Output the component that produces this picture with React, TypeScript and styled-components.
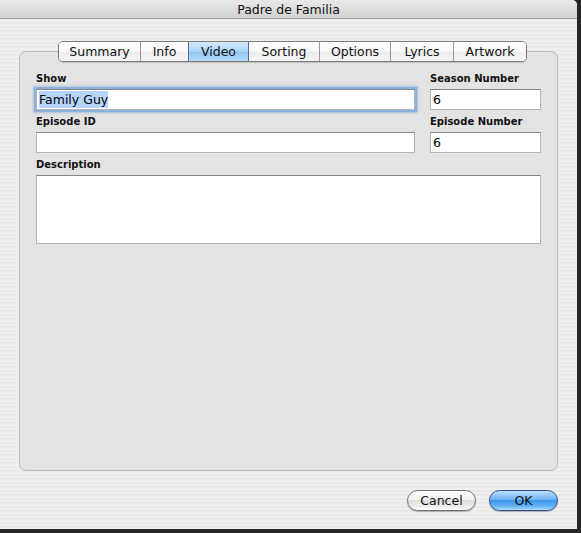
import styled, { createGlobalStyle } from "styled-components";

const GlobalStyle = createGlobalStyle`
  html, body {
    margin: 0;
    padding: 0;
    background: #262626;
  }
  body {
    font-family: "DejaVu Sans", "Liberation Sans", sans-serif;
    color: #000;
  }
`;

const Window = styled.div`
  width: 577px;
  height: 529px;
  display: flex;
  flex-direction: column;
  background: repeating-linear-gradient(
    to bottom,
    #efefef 0px,
    #efefef 2px,
    #e9e9e9 2px,
    #e9e9e9 4px
  );
  border-top-right-radius: 5px;
  overflow: hidden;
`;

const TitleBar = styled.div`
  height: 18px;
  flex: none;
  display: flex;
  align-items: center;
  justify-content: center;
  background: linear-gradient(to bottom, #e9e9e9, #d2d2d2);
  border-bottom: 1px solid #9c9c9c;
  font-size: 12.5px;
  color: #111;
`;

const Body = styled.div`
  flex: 1;
  display: flex;
  flex-direction: column;
  padding: 32px 19px 0 19px;
`;

const GroupBox = styled.div`
  height: 420px;
  box-sizing: border-box;
  border: 1px solid #b9b9b9;
  border-radius: 7px;
  background: #e3e3e3;
  display: flex;
  flex-direction: column;
`;

const TabStrip = styled.div`
  display: flex;
  margin: -11px 0 0 38px;
  height: 21px;
  box-sizing: border-box;
  border: 1px solid #7a7a7a;
  border-radius: 5px;
  overflow: hidden;
  align-self: flex-start;
  box-shadow: 0 1px 1px rgba(0, 0, 0, 0.15);
`;

const Tab = styled.div<{ $active?: boolean; $w: number }>`
  width: ${(p) => p.$w}px;
  box-sizing: border-box;
  display: flex;
  align-items: center;
  justify-content: center;
  font-size: 12.5px;
  color: #111;
  border-left: 1px solid #9a9a9a;
  &:first-child {
    border-left: none;
  }
  background: ${(p) =>
    p.$active
      ? "linear-gradient(to bottom, #d6ebfb 0%, #a9d3f5 50%, #8ec3ef 51%, #b8e0fb 100%)"
      : "linear-gradient(to bottom, #ffffff 0%, #f7f7f7 50%, #ececec 51%, #f6f6f6 100%)"};
  ${(p) => p.$active && "border-left-color: #4f6c9a; & + div { border-left-color: #4f6c9a; }"}
`;

const Fields = styled.div`
  display: grid;
  grid-template-columns: 379px 111px;
  column-gap: 15px;
  row-gap: 5px;
  padding: 10px 16px 0 16px;
`;

const Field = styled.div<{ $span?: boolean }>`
  display: flex;
  flex-direction: column;
  gap: 3px;
  grid-column: ${(p) => (p.$span ? "1 / span 2" : "auto")};
`;

const Label = styled.div`
  font-size: 10px;
  font-weight: bold;
  line-height: 14px;
  color: #111;
`;

const TextBox = styled.div<{ $focused?: boolean; $tall?: boolean }>`
  height: ${(p) => (p.$tall ? 69 : 21)}px;
  box-sizing: border-box;
  background: #fff;
  border: 1px solid #b4b4b4;
  border-top-color: #858585;
  padding: 0 2px;
  display: flex;
  align-items: ${(p) => (p.$tall ? "flex-start" : "center")};
  font-size: 12.5px;
  box-shadow: ${(p) =>
    p.$focused ? "0 0 0 2px #88b1df, 0 0 2px 3px rgba(120, 160, 210, 0.5)" : "none"};
`;

const Selected = styled.span`
  background: #b5d5ff;
  padding: 1px 0;
`;

const ButtonRow = styled.div`
  display: flex;
  justify-content: flex-end;
  gap: 13px;
  padding: 19px 0 0 0;
`;

const Button = styled.div<{ $primary?: boolean }>`
  width: 69px;
  height: 21px;
  box-sizing: border-box;
  border-radius: 11px;
  display: flex;
  align-items: center;
  justify-content: center;
  font-size: 12.5px;
  color: #111;
  border: 1px solid ${(p) => (p.$primary ? "#2c4a8c" : "#6f6f6f")};
  background: ${(p) =>
    p.$primary
      ? "linear-gradient(to bottom, #bfe0fb 0%, #6eb5f1 45%, #3d97ea 50%, #62b3f4 80%, #b2e0ff 100%)"
      : "linear-gradient(to bottom, #ffffff 0%, #f2f2f2 45%, #dedede 50%, #ececec 80%, #ffffff 100%)"};
  box-shadow: 0 1px 1px rgba(0, 0, 0, 0.25);
`;

const tabs = [
  { name: "Summary", w: 81 },
  { name: "Info", w: 48 },
  { name: "Video", w: 60 },
  { name: "Sorting", w: 71 },
  { name: "Options", w: 71 },
  { name: "Lyrics", w: 63 },
  { name: "Artwork", w: 73 },
];

const App = () => {
  return (
    <>
      <GlobalStyle />
      <Window>
        <TitleBar>Padre de Familia</TitleBar>
        <Body>
          <GroupBox>
            <TabStrip>
              {tabs.map((t) => (
                <Tab key={t.name} $w={t.w} $active={t.name === "Video"}>
                  {t.name}
                </Tab>
              ))}
            </TabStrip>
            <Fields>
              <Field>
                <Label>Show</Label>
                <TextBox $focused>
                  <Selected>Family Guy</Selected>
                </TextBox>
              </Field>
              <Field>
                <Label>Season Number</Label>
                <TextBox>6</TextBox>
              </Field>
              <Field>
                <Label>Episode ID</Label>
                <TextBox />
              </Field>
              <Field>
                <Label>Episode Number</Label>
                <TextBox>6</TextBox>
              </Field>
              <Field $span>
                <Label>Description</Label>
                <TextBox $tall />
              </Field>
            </Fields>
          </GroupBox>
          <ButtonRow>
            <Button>Cancel</Button>
            <Button $primary>OK</Button>
          </ButtonRow>
        </Body>
      </Window>
    </>
  );
};

export default App;
